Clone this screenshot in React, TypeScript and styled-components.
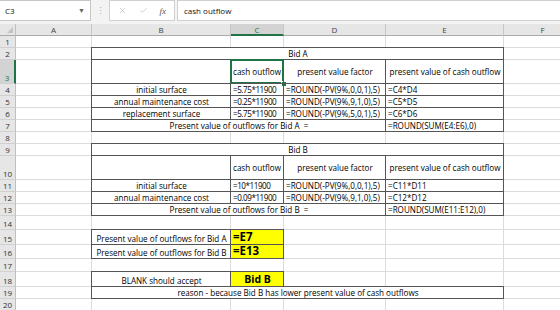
import React from 'react'
import styled, { createGlobalStyle, css } from 'styled-components'
import { X, Check } from 'lucide-react'

const GlobalStyle = createGlobalStyle`
  html, body {
    margin: 0;
    padding: 0;
    background: #fff;
  }
  body {
    font-family: 'Open Sans', 'Noto Sans', sans-serif;
    color: #000;
    overflow: hidden;
  }
`

const GRID = '#dcdcdc'
const BOX = '#555'
const GREEN = '#217346'
const YELLOW = '#ffff00'

const Page = styled.div`
  width: 560px;
  height: 310px;
  overflow: hidden;
  background: #fff;
`

const FormulaBar = styled.div`
  display: flex;
  align-items: stretch;
  height: 21px;
  padding-bottom: 3px;
  background: #f3f3f3;
`

const NameBox = styled.div`
  display: flex;
  align-items: center;
  justify-content: space-between;
  width: 91px;
  padding: 0 5px;
  box-sizing: border-box;
  background: #fff;
  border: 1px solid #c6c6c6;
  border-left: 0;
  font-size: 8px;
  color: #111;
`

const Caret = styled.span`
  font-size: 7px;
  color: #666;
`

const Dots = styled.span`
  display: flex;
  align-items: center;
  justify-content: center;
  width: 18px;
  font-size: 9px;
  color: #b0b0b0;
`

const IconBox = styled.div`
  display: flex;
  align-items: center;
  justify-content: space-around;
  width: 66px;
  padding: 0 2px;
  box-sizing: border-box;
  background: #fff;
  border: 1px solid #d0d0d0;
  color: #a8a8a8;
`

const Fx = styled.span`
  font-family: 'Liberation Serif', serif;
  font-style: italic;
  font-size: 9px;
  color: #555;
`

const FormulaInput = styled.div`
  flex: 1;
  display: flex;
  align-items: center;
  margin-left: 2px;
  padding-left: 6px;
  background: #fff;
  border: 1px solid #d0d0d0;
  border-right: 0;
  font-size: 8px;
  color: #111;
`

const Sheet = styled.div<{ $rows: string }>`
  display: grid;
  grid-template-columns: 16px 76px 139px 53px 102px 118px 78px;
  grid-template-rows: ${(p) => p.$rows};
  font-size: 8.1px;
  line-height: 11px;
`

const Corner = styled.div`
  position: relative;
  background: #e6e6e6;
  border-right: 1px solid #c0c0c0;
  border-bottom: 1px solid #ababab;

  &::after {
    content: '';
    position: absolute;
    right: 2px;
    bottom: 2px;
    border-left: 6px solid transparent;
    border-bottom: 6px solid #c3c3c3;
  }
`

const ColHead = styled.div<{ $active?: boolean }>`
  display: flex;
  align-items: center;
  justify-content: center;
  font-size: 8px;
  background: ${(p) => (p.$active ? '#d3d3d3' : '#e6e6e6')};
  color: ${(p) => (p.$active ? GREEN : '#444')};
  border-right: 1px solid #c6c6c6;
  border-bottom: ${(p) => (p.$active ? `2px solid ${GREEN}` : '1px solid #ababab')};
  box-sizing: border-box;
`

const RowHead = styled.div<{ $active?: boolean }>`
  display: flex;
  align-items: flex-end;
  justify-content: center;
  font-size: 8px;
  line-height: 10px;
  background: ${(p) => (p.$active ? '#d3d3d3' : '#e6e6e6')};
  color: ${(p) => (p.$active ? GREEN : '#333')};
  border-right: ${(p) => (p.$active ? `2px solid ${GREEN}` : '1px solid #c0c0c0')};
  border-bottom: 1px solid #d0d0d0;
  box-sizing: border-box;
`

const Cell = styled.div<{
  $span?: number
  $align?: 'left' | 'center'
  $box?: boolean
  $bold?: number
  $fill?: string
  $middle?: boolean
  $tight?: boolean
}>`
  display: flex;
  align-items: ${(p) => (p.$middle ? 'center' : 'flex-end')};
  justify-content: ${(p) => (p.$align === 'center' ? 'center' : 'flex-start')};
  grid-column: span ${(p) => p.$span ?? 1};
  padding: 0 1px 0 2px;
  min-width: 0;
  white-space: pre;
  letter-spacing: ${(p) => (p.$tight ? '-0.45px' : 'normal')};
  background: ${(p) => p.$fill ?? 'transparent'};
  border-right: 1px solid ${GRID};
  border-bottom: 1px solid ${GRID};
  box-sizing: border-box;
  ${(p) =>
    p.$box &&
    css`
      position: relative;
      z-index: 1;
      margin: -1px 0 0 -1px;
      border: 1px solid ${BOX};
    `}
  ${(p) =>
    p.$bold &&
    css`
      font-size: ${p.$bold}px;
      font-weight: 700;
      line-height: 14px;
    `}
`

const Selection = styled.div`
  position: absolute;
  inset: -1px;
  border: 2px solid ${GREEN};
  pointer-events: none;
`

const FillHandle = styled.div`
  position: absolute;
  right: -4px;
  bottom: -4px;
  width: 4px;
  height: 4px;
  background: ${GREEN};
  border: 1px solid #fff;
`

type CellDef = {
  text?: string
  span?: number
  align?: 'left' | 'center'
  box?: boolean
  bold?: number
  fill?: string
  middle?: boolean
  sel?: boolean
  tight?: boolean
}

type RowDef = { h: number; cells: CellDef[] }

const empty = (n = 6): CellDef[] => Array.from({ length: n }, () => ({}))

const headerRow = (sel: boolean): CellDef[] => [
  {},
  { box: true },
  { text: 'cash outflow', box: true, middle: true, sel },
  { text: 'present value factor', box: true, middle: true, align: 'center' },
  { text: 'present value of cash outflow', box: true, middle: true, align: 'center' },
  {},
]

const line = (label: string, c: string, d: string, e: string): CellDef[] => [
  {},
  { text: label, box: true, align: 'center' },
  { text: c, box: true, tight: true },
  { text: d, box: true },
  { text: e, box: true },
  {},
]

const total = (label: string, e: string): CellDef[] => [
  {},
  { text: label, span: 3, box: true, align: 'center' },
  { text: e, box: true },
  {},
]

const answer = (label: string, value: string, size: number, align?: 'center'): CellDef[] => [
  {},
  { text: label, box: true, align: 'center' },
  { text: value, box: true, bold: size, fill: YELLOW, align },
  {},
  {},
  {},
]

const rows: RowDef[] = [
  { h: 12, cells: empty() },
  { h: 12, cells: [{}, { text: 'Bid A', span: 4, align: 'center', box: true }, {}] },
  { h: 24, cells: headerRow(true) },
  { h: 12, cells: line('initial surface', '=5.75*11900', '=ROUND(-PV(9%,0,0,1),5)', '=C4*D4') },
  { h: 12, cells: line('annual maintenance cost', '=0.25*11900', '=ROUND(-PV(9%,9,1,0),5)', '=C5*D5') },
  { h: 12, cells: line('replacement surface', '=5.75*11900', '=ROUND(-PV(9%,5,0,1),5)', '=C6*D6') },
  { h: 12, cells: total('Present value of outflows for Bid A  =', '=ROUND(SUM(E4:E6),0)') },
  { h: 12, cells: empty() },
  { h: 12, cells: [{}, { text: 'Bid B', span: 4, align: 'center', box: true }, {}] },
  { h: 24, cells: headerRow(false) },
  { h: 12, cells: line('initial surface', '=10*11900', '=ROUND(-PV(9%,0,0,1),5)', '=C11*D11') },
  { h: 12, cells: line('annual maintenance cost', '=0.09*11900', '=ROUND(-PV(9%,9,1,0),5)', '=C12*D12') },
  { h: 12, cells: total('Present value of outflows for Bid B  =', '=ROUND(SUM(E11:E12),0)') },
  { h: 14, cells: empty() },
  { h: 15, cells: answer('Present value of outflows for Bid A', '=E7', 11.5) },
  { h: 14, cells: answer('Present value of outflows for Bid B', '=E13', 11.5) },
  { h: 13, cells: empty() },
  { h: 15, cells: answer('BLANK should accept', 'Bid B', 10.5, 'center') },
  {
    h: 12,
    cells: [
      {},
      {
        text: 'reason - because Bid B has lower present value of cash outflows',
        span: 4,
        box: true,
        align: 'center',
      },
      {},
    ],
  },
  { h: 12, cells: empty() },
]

const columns = ['A', 'B', 'C', 'D', 'E', 'F']

export default function App() {
  const template = ['12px', ...rows.map((r) => `${r.h}px`)].join(' ')
  return (
    <Page>
      <GlobalStyle />
      <FormulaBar>
        <NameBox>
          C3
          <Caret>▼</Caret>
        </NameBox>
        <Dots>⋮</Dots>
        <IconBox>
          <X size={9} strokeWidth={1.4} />
          <Check size={9} strokeWidth={1.4} />
          <Fx>fx</Fx>
        </IconBox>
        <FormulaInput>cash outflow</FormulaInput>
      </FormulaBar>

      <Sheet $rows={template}>
        <Corner />
        {columns.map((c) => (
          <ColHead key={c} $active={c === 'C'}>
            {c}
          </ColHead>
        ))}
        {rows.map((row, ri) => (
          <React.Fragment key={ri}>
            <RowHead $active={ri === 2}>{ri + 1}</RowHead>
            {row.cells.map((cell, ci) => (
              <Cell
                key={ci}
                $span={cell.span}
                $align={cell.align}
                $box={cell.box}
                $bold={cell.bold}
                $fill={cell.fill}
                $middle={cell.middle}
                $tight={cell.tight}
              >
                {cell.text}
                {cell.sel && (
                  <>
                    <Selection />
                    <FillHandle />
                  </>
                )}
              </Cell>
            ))}
          </React.Fragment>
        ))}
      </Sheet>
    </Page>
  )
}
